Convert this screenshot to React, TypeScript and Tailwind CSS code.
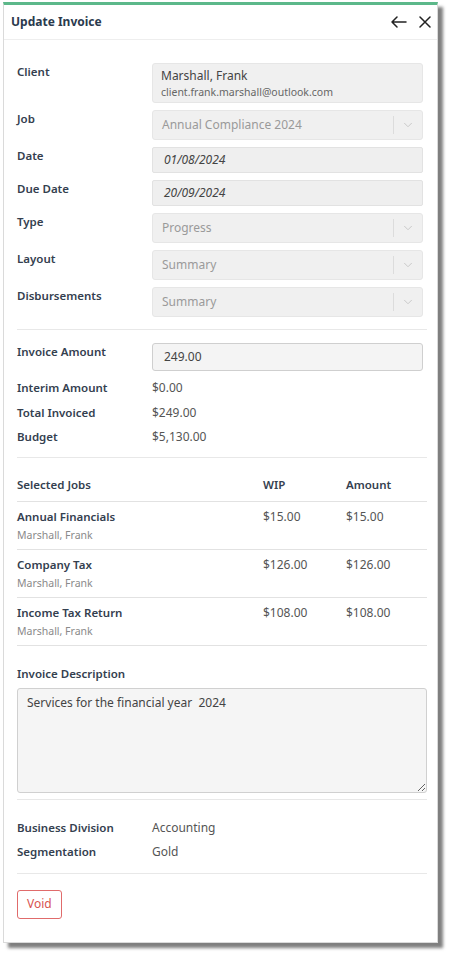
import { ChevronDown } from "lucide-react";

const font = { fontFamily: '"Noto Sans", "Open Sans", sans-serif' };

function Label({ children }: { children: React.ReactNode }) {
  return (
    <div className="w-[135px] shrink-0 text-[11.5px] leading-[18px] font-semibold text-[#34404f]">
      {children}
    </div>
  );
}

function SelectBox({ value }: { value: string }) {
  return (
    <div className="flex h-[30px] flex-1 items-center rounded-[3px] border border-[#e6e6e6] bg-[#f0f0f0]">
      <span className="flex-1 pl-[9px] text-[12px] text-[#9a9a9a]">{value}</span>
      <div className="h-[18px] w-px bg-[#dcdcdc]" />
      <div className="flex w-[28px] justify-center text-[#c4c4c4]">
        <ChevronDown size={14} strokeWidth={1.5} />
      </div>
    </div>
  );
}

function DateBox({ value }: { value: string }) {
  return (
    <div className="flex h-[26px] flex-1 items-center rounded-[2px] border border-[#e2e2e2] bg-[#efefef] pl-[11px] text-[12px] italic text-[#444]">
      {value}
    </div>
  );
}

function InfoRow({ label, value }: { label: string; value: string }) {
  return (
    <div className="flex">
      <div className="w-[135px] text-[11.5px] font-semibold text-[#34404f]">{label}</div>
      <div className="text-[#555]">{value}</div>
    </div>
  );
}

const jobs = [
  { name: "Annual Financials", wip: "$15.00", amount: "$15.00" },
  { name: "Company Tax", wip: "$126.00", amount: "$126.00" },
  { name: "Income Tax Return", wip: "$108.00", amount: "$108.00" },
];

export default function App() {
  return (
    <div className="min-h-[954px] bg-white pt-[2px] pl-[3px]" style={font}>
      <div className="w-[435px] border-x border-b border-[#dadada] border-t-[3px] border-t-[#5cb88a] bg-white shadow-[5px_5px_3px_rgba(0,0,0,0.5)]">
        <div className="flex h-[35px] items-center justify-between border-b border-[#eeeeee] pl-[7px] pr-[6px]">
          <span className="text-[12px] font-bold text-[#2b3a4e]">Update Invoice</span>
          <div className="flex items-center gap-[12px] text-[#222]">
            <svg width="16" height="12" viewBox="0 0 16 12" fill="none" stroke="currentColor" strokeWidth="1.5" strokeLinecap="round" strokeLinejoin="round">
              <path d="M1 6H15M6 1L1 6L6 11" />
            </svg>
            <svg width="12" height="12" viewBox="0 0 12 12" fill="none" stroke="currentColor" strokeWidth="1.5" strokeLinecap="round">
              <path d="M1 1L11 11M11 1L1 11" />
            </svg>
          </div>
        </div>

        <div className="pl-[13px] pr-[10px] pb-[23px] pt-[23px]">
          <div className="flex flex-col gap-[7px] pr-[4px]">
            <div className="flex">
              <Label>Client</Label>
              <div className="flex h-[40px] flex-1 flex-col justify-center rounded-[3px] border border-[#e6e6e6] bg-[#f0f0f0] pl-[8px]">
                <span className="text-[12px] leading-[17px] text-[#444]">Marshall, Frank</span>
                <span className="text-[10.5px] leading-[16px] text-[#666]">
                  client.frank.marshall@outlook.com
                </span>
              </div>
            </div>
            <div className="flex">
              <Label>Job</Label>
              <SelectBox value="Annual Compliance 2024" />
            </div>
            <div className="flex">
              <Label>Date</Label>
              <DateBox value="01/08/2024" />
            </div>
            <div className="flex">
              <Label>Due Date</Label>
              <DateBox value="20/09/2024" />
            </div>
            <div className="flex">
              <Label>Type</Label>
              <SelectBox value="Progress" />
            </div>
            <div className="flex">
              <Label>Layout</Label>
              <SelectBox value="Summary" />
            </div>
            <div className="flex">
              <Label>Disbursements</Label>
              <SelectBox value="Summary" />
            </div>
          </div>

          <div className="mt-[12px] border-t border-[#e8e8e8]" />

          <div className="mt-[13px] flex pr-[4px]">
            <Label>Invoice Amount</Label>
            <div className="flex h-[28px] flex-1 items-center rounded-[3px] border border-[#cfcfcf] bg-[#f4f4f4] pl-[11px] text-[12px] text-[#444]">
              249.00
            </div>
          </div>

          <div className="mt-[5px] flex flex-col text-[12px] leading-[24.5px]">
            <InfoRow label="Interim Amount" value="$0.00" />
            <InfoRow label="Total Invoiced" value="$249.00" />
            <InfoRow label="Budget" value="$5,130.00" />
          </div>

          <div className="mt-[7px] border-t border-[#e8e8e8]" />

          <div className="mt-[18px] flex border-b border-[#e2e2e2] pb-[7px] text-[11.5px] font-semibold leading-[18px] text-[#34404f]">
            <div className="w-[246px]">Selected Jobs</div>
            <div className="w-[83px]">WIP</div>
            <div>Amount</div>
          </div>
          {jobs.map((job) => (
            <div
              key={job.name}
              className="flex h-[48px] border-b border-[#e2e2e2] pt-[6px] text-[12px] leading-[18px]"
            >
              <div className="w-[246px]">
                <div className="text-[11.5px] font-semibold text-[#34404f]">{job.name}</div>
                <div className="text-[10.5px] text-[#8a8a8a]">Marshall, Frank</div>
              </div>
              <div className="w-[83px] text-[#555]">{job.wip}</div>
              <div className="text-[#555]">{job.amount}</div>
            </div>
          ))}

          <div className="mt-[19px] text-[11.5px] font-semibold leading-[18px] text-[#34404f]">
            Invoice Description
          </div>
          <textarea
            readOnly
            defaultValue="Services for the financial year  2024"
            className="mt-[5px] block h-[105px] w-full rounded-[3px] border border-[#d0d0d0] bg-[#f5f5f5] px-[9px] py-[5px] text-[12px] leading-[18px] text-[#444] outline-none"
          />

          <div className="mt-[6px] border-t border-[#e8e8e8]" />

          <div className="mt-[16px] flex flex-col text-[12px] leading-[24px]">
            <InfoRow label="Business Division" value="Accounting" />
            <InfoRow label="Segmentation" value="Gold" />
          </div>

          <div className="mt-[9px] border-t border-[#e8e8e8]" />

          <button className="mt-[16px] h-[29px] rounded-[3px] border border-[#e06b6b] px-[9px] text-[12px] text-[#d9534f]">
            Void
          </button>
        </div>
      </div>
    </div>
  );
}
